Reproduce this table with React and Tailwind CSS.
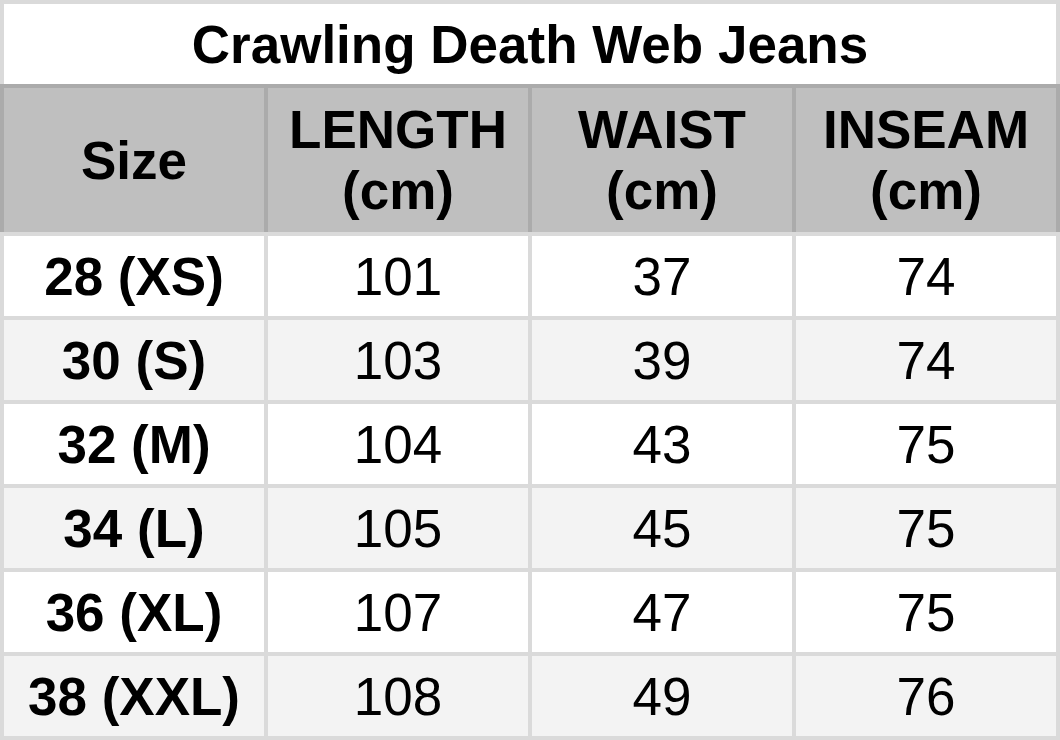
const rows = [
  ['28 (XS)', '101', '37', '74'],
  ['30 (S)', '103', '39', '74'],
  ['32 (M)', '104', '43', '75'],
  ['34 (L)', '105', '45', '75'],
  ['36 (XL)', '107', '47', '75'],
  ['38 (XXL)', '108', '49', '76'],
]

const headers = [['Size'], ['LENGTH', '(cm)'], ['WAIST', '(cm)'], ['INSEAM', '(cm)']]

export default function App() {
  return (
    <div
      className="flex h-[740px] w-[1060px] flex-col bg-[#dadada] p-[4px] text-black"
      style={{ fontFamily: '"Liberation Sans", Arial, sans-serif' }}
    >
      <div className="flex h-[80px] items-center justify-center bg-white text-[53px] font-bold leading-none">
        Crawling Death Web Jeans
      </div>

      <div className="-mx-[4px] grid grid-cols-4 gap-x-[4px] bg-[#ababab] px-[4px] pt-[4px]">
        {headers.map((lines, i) => (
          <div
            key={i}
            className="flex h-[144px] flex-col items-center justify-center bg-[#bfbfbf] text-center text-[53px] font-bold leading-[61px]"
          >
            {lines.map((l) => (
              <span key={l}>{l}</span>
            ))}
          </div>
        ))}
      </div>

      <div className="mt-[4px] grid grid-cols-4 gap-[4px]">
        {rows.map((r, ri) =>
          r.map((cell, ci) => (
            <div
              key={ri + '-' + ci}
              className={`flex h-[80px] items-center justify-center text-[53px] leading-none ${
                ri % 2 === 0 ? 'bg-white' : 'bg-[#f3f3f3]'
              } ${ci === 0 ? 'font-bold' : ''}`}
            >
              {cell}
            </div>
          ))
        )}
      </div>
    </div>
  )
}
